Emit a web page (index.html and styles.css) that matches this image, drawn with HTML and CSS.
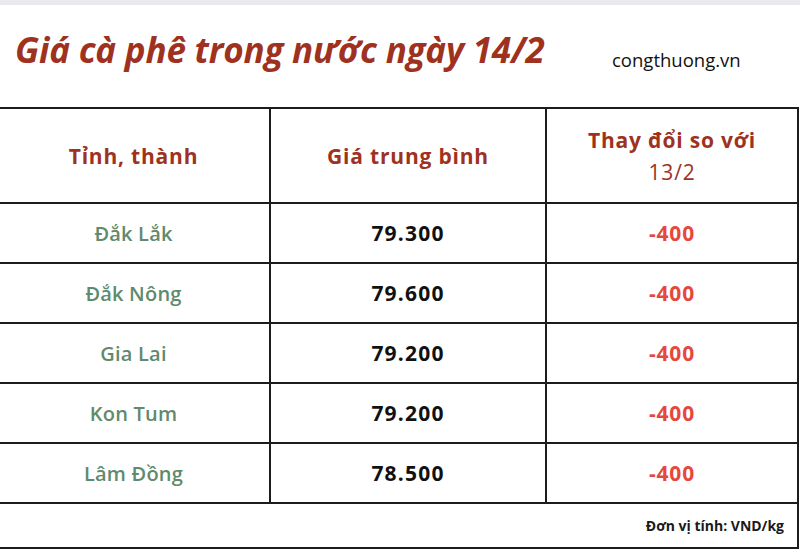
FILE: index.html
```html
<!DOCTYPE html>
<html lang="vi">
<head>
<meta charset="utf-8">
<link rel="stylesheet" href="styles.css">
</head>
<body>
<div class="topbar"></div>
<div class="header">
  <h1 class="title">Giá cà phê trong nước ngày 14/2</h1>
  <div class="source">congthuong.vn</div>
</div>
<table class="prices">
  <colgroup>
    <col class="c1"><col class="c2"><col class="c3">
  </colgroup>
  <thead>
    <tr>
      <th>Tỉnh, thành</th>
      <th>Giá trung bình</th>
      <th>Thay đổi so với<br><span class="sub">13/2</span></th>
    </tr>
  </thead>
  <tbody>
    <tr><td class="prov">Đắk Lắk</td><td class="val">79.300</td><td class="chg">-400</td></tr>
    <tr><td class="prov">Đắk Nông</td><td class="val">79.600</td><td class="chg">-400</td></tr>
    <tr><td class="prov">Gia Lai</td><td class="val">79.200</td><td class="chg">-400</td></tr>
    <tr><td class="prov">Kon Tum</td><td class="val">79.200</td><td class="chg">-400</td></tr>
    <tr><td class="prov">Lâm Đồng</td><td class="val">78.500</td><td class="chg">-400</td></tr>
    <tr><td class="unit" colspan="3">Đơn vị tính: VND/kg</td></tr>
  </tbody>
</table>
</body>
</html>
```
FILE: styles.css
```css
html, body {
  margin: 0;
  padding: 0;
  background: #ffffff;
  width: 800px;
  height: 550px;
  overflow: hidden;
  font-family: "Open Sans", "Noto Sans", sans-serif;
}
.topbar {
  height: 5px;
  background: #e9e9ee;
}
.header {
  height: 102px;
  display: flex;
  align-items: center;
  padding-left: 15px;
}
.title {
  margin: 0;
  width: 597px;
  font-family: "Open Sans", "Noto Sans", sans-serif;
  font-style: italic;
  font-weight: 700;
  font-size: 35px;
  color: #9e321f;
  letter-spacing: -0.2px;
  margin-top: -14px;
}
.source {
  font-family: "Open Sans", sans-serif;
  font-size: 18.5px;
  color: #111;
  margin-top: 6px;
}
.prices {
  border-collapse: collapse;
  table-layout: fixed;
  width: 801px;
  margin-left: -4px;
}
.c1 { width: 273px; }
.c2 { width: 276px; }
.c3 { width: 252px; }
.prices th, .prices td {
  border: 2px solid #1c1c1c;
  text-align: center;
  padding: 0;
}
.prices th {
  height: 93px;
  font-size: 21px;
  font-weight: 700;
  color: #9e321f;
  line-height: 32px;
  letter-spacing: 0.8px;
}
.prices th .sub {
  font-weight: 400;
}
.prices td {
  height: 58px;
  font-size: 21px;
}
.prices td.prov {
  color: #5f8a6d;
  font-weight: 600;
  font-size: 20px;
  letter-spacing: 0.2px;
}
.val { color: #111; font-weight: 700; letter-spacing: 1.2px; }
.chg { color: #e5483c; font-weight: 700; letter-spacing: 0.8px; }
.prices td.unit {
  height: 43px;
  text-align: right;
  padding-right: 13px;
  font-size: 14px;
  font-weight: 700;
  color: #1a1a1a;
  letter-spacing: 0;
}
```
